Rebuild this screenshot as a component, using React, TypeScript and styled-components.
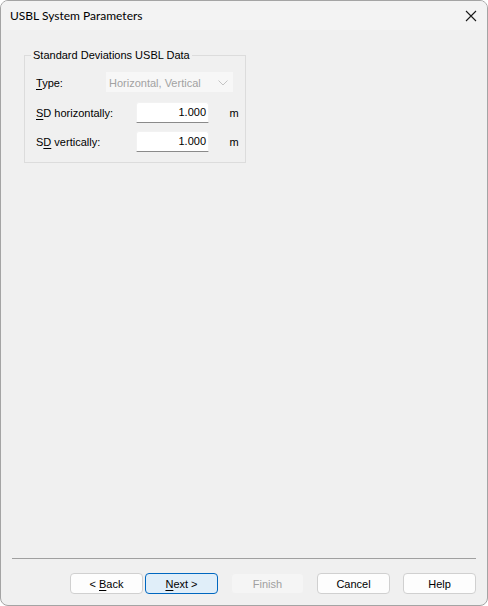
import React from 'react';
import styled, { createGlobalStyle, css } from 'styled-components';

const Global = createGlobalStyle`
  html, body { margin: 0; padding: 0; background: #ffffff; }
  body { font-family: "Liberation Sans", Arial, sans-serif; font-size: 11px; color: #000; }
  * { box-sizing: border-box; }
`;

const Window = styled.div`
  width: 488px;
  height: 606px;
  display: flex;
  flex-direction: column;
  background: #f0f0f0;
  border: 1px solid #a4a4a4;
  border-radius: 8px;
  overflow: hidden;
`;

const TitleBar = styled.div`
  height: 29px;
  flex: none;
  display: flex;
  align-items: center;
  justify-content: space-between;
  padding: 0 10px 0 9px;
  background: #f3f3f3;
`;

const Title = styled.span`
  font-family: Lato, "Noto Sans", sans-serif;
  font-size: 12px;
  line-height: 16px;
  margin-top: 1px;
`;

const CloseButton = styled.div`
  width: 12px;
  height: 12px;
  display: flex;
  align-items: center;
  justify-content: center;
`;

const Content = styled.div`
  flex: 1;
  padding: 17px 0 0 23px;
`;

const Group = styled.fieldset`
  margin: 0;
  width: 222px;
  border: 1px solid #dcdcdc;
  padding: 9px 0 10px 6px;
`;

const Legend = styled.legend`
  padding: 0 2px;
  line-height: 16px;
  font-size: 11px;
`;

const Rows = styled.div`
  display: flex;
  flex-direction: column;
  padding-left: 5px;
`;

const Row = styled.div<{ $label: number; $gapTop?: number }>`
  display: grid;
  grid-template-columns: ${(p) => p.$label}px auto auto;
  align-items: center;
  margin-top: ${(p) => p.$gapTop ?? 0}px;
`;

const Label = styled.label`
  line-height: 16px;
  padding-top: 1px;
`;

const Combo = styled.div`
  width: 127px;
  height: 20px;
  display: flex;
  align-items: center;
  justify-content: space-between;
  padding: 1px 5px 0 3px;
  background: #f7f7f7;
  color: #a2a2a2;
`;

const Input = styled.div`
  width: 73px;
  height: 21px;
  display: flex;
  align-items: center;
  justify-content: flex-end;
  padding: 0 2px 2px 0;
  background: #ffffff;
  border: 1px solid #f2f2f2;
  border-bottom: 1px solid #8a8a8a;
  border-radius: 3px 3px 0 0;
`;

const Unit = styled.span`
  margin-left: 14px;
  padding-top: 1px;
`;

const U = styled.span`
  text-decoration: underline;
  text-underline-offset: 2px;
`;

const Footer = styled.div`
  flex: none;
  display: flex;
  flex-direction: column;
  padding: 0 11px 11px 11px;
`;

const Separator = styled.div`
  height: 1px;
  background: #a0a0a0;
`;

const ButtonBar = styled.div`
  display: flex;
  justify-content: flex-end;
  gap: 13px;
  padding: 14px 0 0 0;
`;

const Pair = styled.div`
  display: flex;
  gap: 2px;
`;

const Button = styled.button<{ $variant?: 'default' | 'primary' | 'disabled' }>`
  width: 73px;
  height: 21px;
  font-family: inherit;
  font-size: 11px;
  line-height: 16px;
  padding: 0;
  border-radius: 4px;
  color: #000;
  background: #fdfdfd;
  border: 1px solid #d0d0d0;
  ${(p) =>
    p.$variant === 'primary' &&
    css`
      background: #e0eef9;
      border: 1px solid #0067c0;
    `}
  ${(p) =>
    p.$variant === 'disabled' &&
    css`
      background: #f5f5f5;
      border: 1px solid #f0f0f0;
      color: #a0a0a0;
    `}
`;

export default function App() {
  return (
    <>
      <Global />
      <Window>
        <TitleBar>
          <Title>USBL System Parameters</Title>
          <CloseButton>
            <svg width="12" height="12" viewBox="0 0 12 12">
              <path d="M1 1 L11 11 M11 1 L1 11" stroke="#1a1a1a" strokeWidth="1.1" fill="none" />
            </svg>
          </CloseButton>
        </TitleBar>
        <Content>
          <Group>
            <Legend>Standard Deviations USBL Data</Legend>
            <Rows>
              <Row $label={70}>
                <Label>
                  <U>T</U>ype:
                </Label>
                <Combo>
                  <span>Horizontal, Vertical</span>
                  <svg width="10" height="6" viewBox="0 0 10 6">
                    <path d="M0.5 0.5 L5 5 L9.5 0.5" stroke="#c4c4c4" strokeWidth="1" fill="none" />
                  </svg>
                </Combo>
              </Row>
              <Row $label={100} $gapTop={10}>
                <Label>
                  <U>S</U>D horizontally:
                </Label>
                <Input>1.000</Input>
                <Unit>m</Unit>
              </Row>
              <Row $label={100} $gapTop={8}>
                <Label>
                  S<U>D</U> vertically:
                </Label>
                <Input>1.000</Input>
                <Unit>m</Unit>
              </Row>
            </Rows>
          </Group>
        </Content>
        <Footer>
          <Separator />
          <ButtonBar>
            <Pair>
              <Button>
                &lt; <U>B</U>ack
              </Button>
              <Button $variant="primary">
                <U>N</U>ext &gt;
              </Button>
            </Pair>
            <Button $variant="disabled">Finish</Button>
            <Button>Cancel</Button>
            <Button>Help</Button>
          </ButtonBar>
        </Footer>
      </Window>
    </>
  );
}
